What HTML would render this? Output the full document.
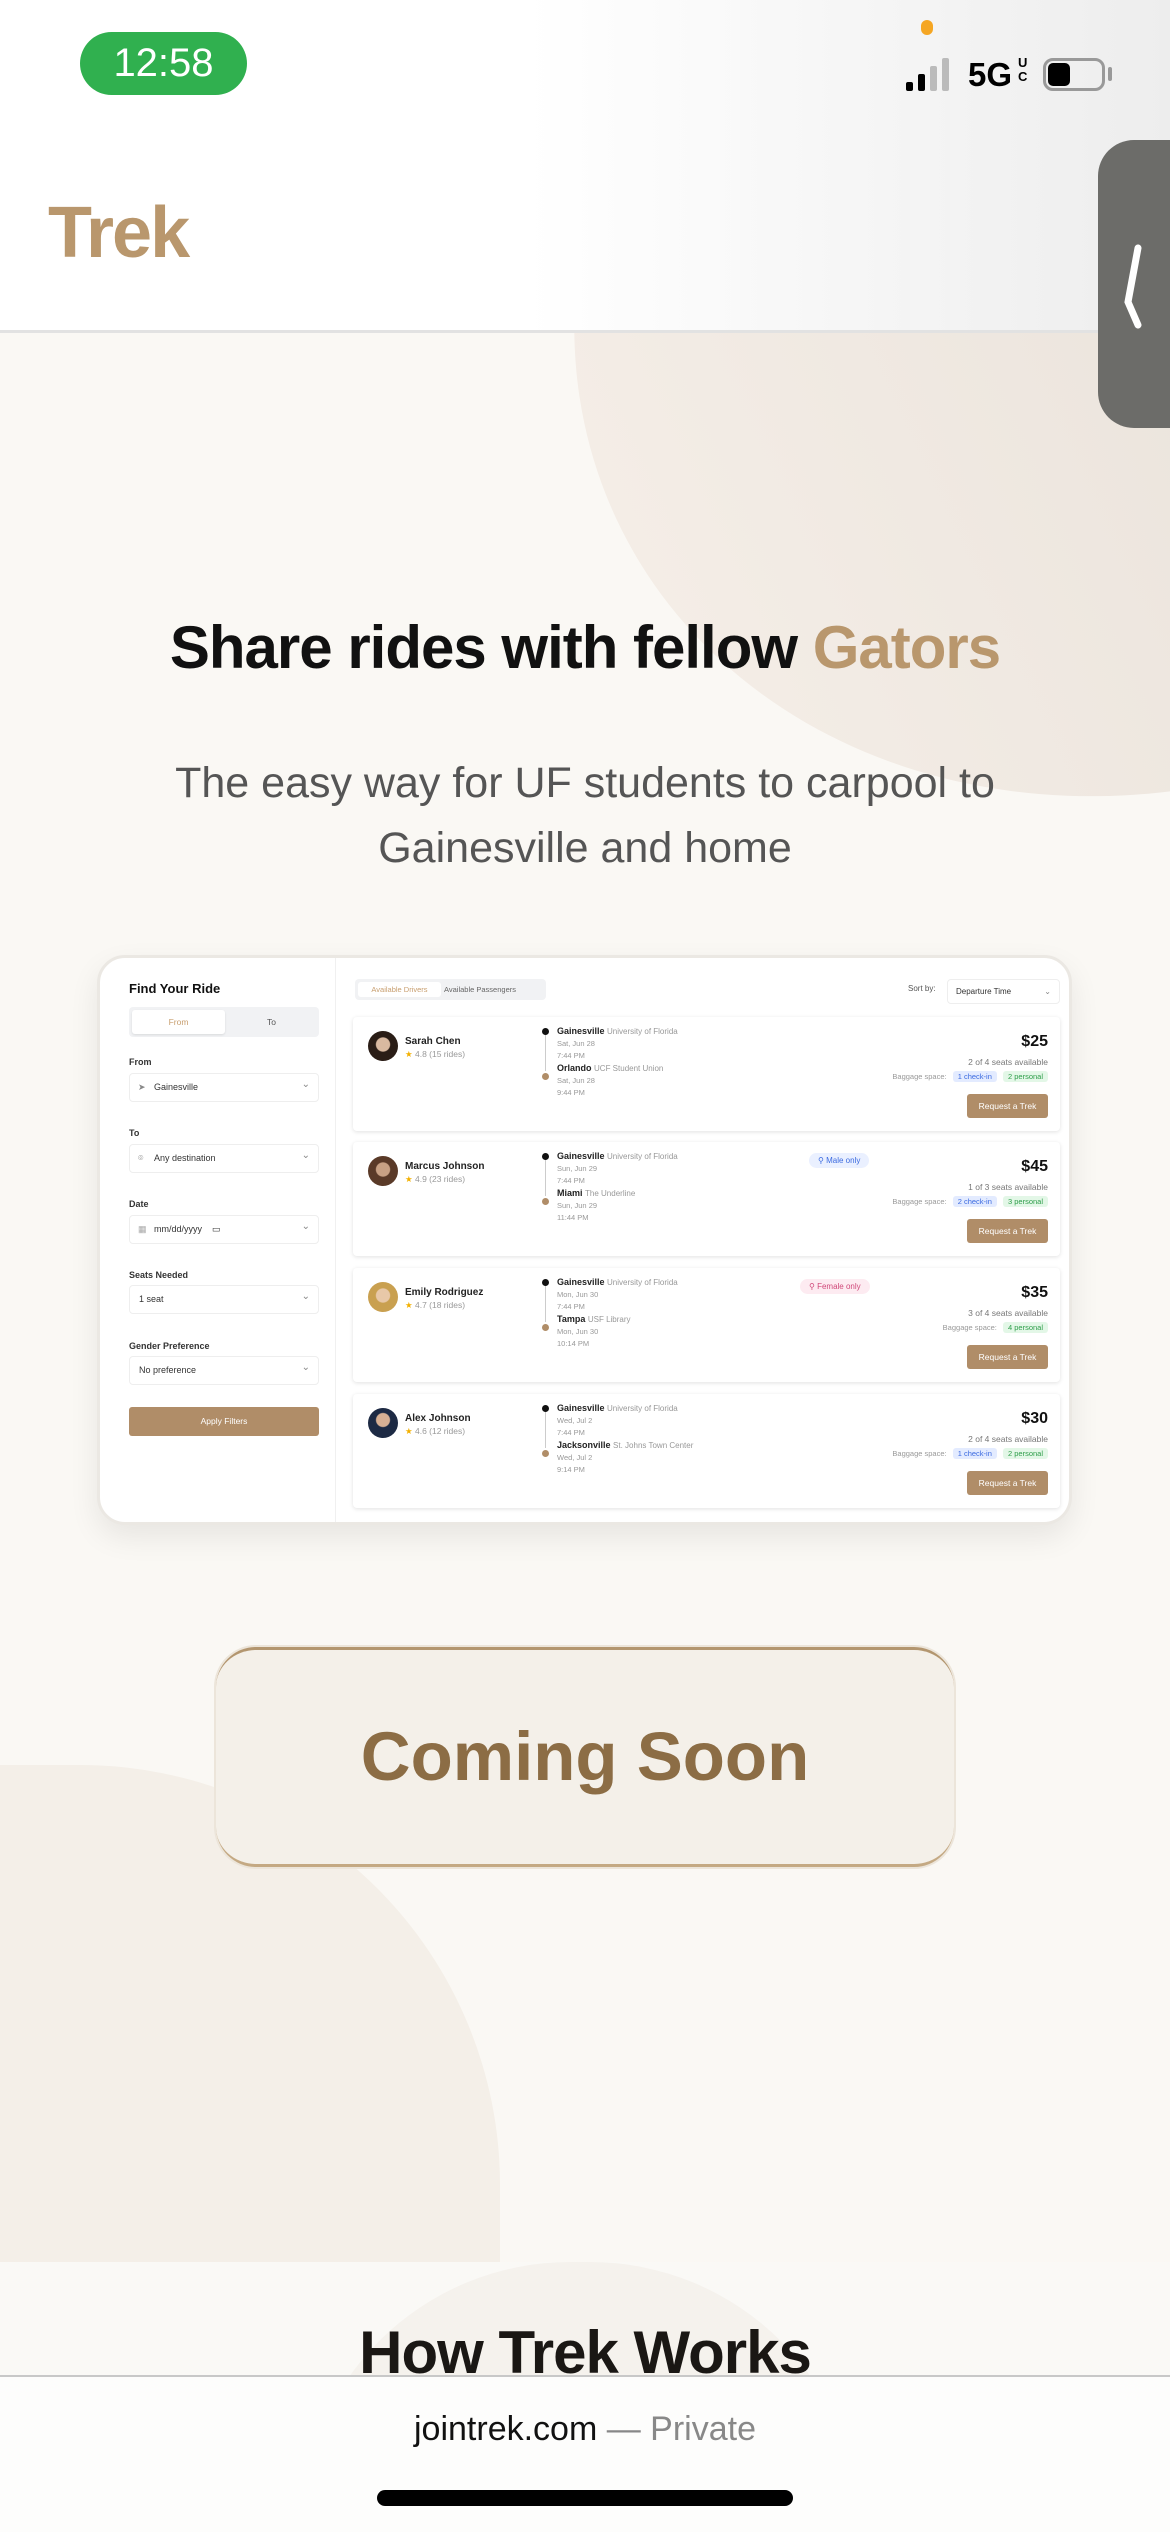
<!DOCTYPE html>
<html style="width:1170px;height:2532px;overflow:hidden"><head><meta charset="utf-8">
<style>
*{box-sizing:border-box;margin:0;padding:0}
html,body{width:1170px;height:2532px;overflow:hidden}
body{background:#faf8f4;font-family:"Liberation Sans",sans-serif;position:relative}
#w{position:absolute;left:0;top:0;width:1170px;height:2532px;overflow:hidden}
.abs{position:absolute}
.header{left:0;top:0;width:1170px;height:333px;background:linear-gradient(90deg,#fff 0%,#fff 45%,#ededed 100%);border-bottom:3px solid #e2e2e2}
.pill{left:80px;top:32px;width:167px;height:63px;border-radius:32px;background:#30b04f;color:#fff;font-size:40px;text-align:center;line-height:63px}
.trek{left:48px;top:192px;font-size:72px;font-weight:bold;color:#b9976d;letter-spacing:-2px}
.tab{left:1098px;top:140px;width:80px;height:288px;background:#6c6c69;border-radius:36px 0 0 36px}
h1{position:absolute;left:0;width:1170px;top:613px;text-align:center;font-size:60px;font-weight:bold;color:#111;letter-spacing:-1px}
.sub{left:0;width:1170px;top:751px;text-align:center;font-size:43px;color:#555;line-height:65px}
.card{left:97px;top:955px;width:975px;height:570px;background:#fff;border-radius:28px;border:3px solid #ebe8e3;box-shadow:0 12px 30px rgba(0,0,0,.08);overflow:hidden}
.lbl{position:absolute;left:29px;font-size:9px;font-weight:bold;color:#333}
.sel{position:absolute;left:29px;width:190px;height:29px;border:1px solid #eee;border-radius:4px;font-size:9px;color:#333;line-height:27px;padding-left:24px}
.sel:after{content:"⌄";position:absolute;right:8px;top:-3px;color:#888;font-size:10px}
.row{position:absolute;left:253px;width:707px;height:114px;background:#fff;border-radius:4px;box-shadow:0 1px 4px rgba(0,0,0,.12)}
.av{position:absolute;left:15px;top:14px;width:30px;height:30px;border-radius:50%}
.nm{position:absolute;left:52px;top:19px;font-size:10px;font-weight:bold;color:#222}
.rt{position:absolute;left:52px;top:32px;font-size:8.5px;color:#999}
.rt b{color:#f3b000;font-weight:normal}
.tl{position:absolute;left:192px;top:14px;width:1px;height:40px;background:#ccc}
.d1{position:absolute;left:189px;top:11px;width:7px;height:7px;border-radius:50%;background:#111}
.d2{position:absolute;left:189px;top:56px;width:7px;height:7px;border-radius:50%;background:#b08d68}
.loc{position:absolute;left:204px;font-size:9px;font-weight:bold;color:#222;white-space:nowrap}
.loc span{font-weight:normal;color:#999;font-size:8px}
.dt{position:absolute;left:204px;font-size:7.5px;color:#999;line-height:12px}
.pr{position:absolute;right:12px;top:16px;font-size:16px;font-weight:bold;color:#111}
.st{position:absolute;right:12px;top:40px;font-size:8.5px;color:#777}
.bg{position:absolute;right:12px;top:55px;font-size:7.5px;color:#999;white-space:nowrap}
.bg i{font-style:normal;padding:1px 5px;border-radius:3px;margin-left:4px}
.b{background:#e3ebff;color:#3b6ae0}.g{background:#e3f7e7;color:#2e9e4a}
.btn{position:absolute;right:12px;top:77px;width:81px;height:24px;background:#b08d68;color:#fff;font-size:8.5px;text-align:center;line-height:24px;border-radius:3px}
.badge{position:absolute;top:11px;font-size:8px;padding:3px 9px;border-radius:9px}
</style></head><body><div id="w">
<div class="abs" style="left:560px;top:-250px;width:1200px;height:1030px;border-radius:50%;background:linear-gradient(90deg,#f4ede6,#e3dcd4);transform:rotate(-25deg)"></div>
<div class="abs" style="left:-400px;top:1765px;width:900px;height:497px;border-radius:0 420px 0 0;background:#f4efe8"></div>
<div class="abs" style="left:0;top:2262px;width:1170px;height:270px;background:#faf9f6"></div>
<div class="abs" style="left:300px;top:2262px;width:560px;height:270px;border-radius:280px 280px 0 0;background:#f5f2ed"></div>

<div class="abs header"></div>
<div class="abs pill">12:58</div>
<div class="abs" style="left:921px;top:20px;width:12px;height:15px;border-radius:6px;background:#f5a623"></div>
<div class="abs" style="left:906px;top:82px;width:7px;height:9px;background:#000;border-radius:2px"></div>
<div class="abs" style="left:918px;top:74px;width:7px;height:17px;background:#000;border-radius:2px"></div>
<div class="abs" style="left:930px;top:66px;width:7px;height:25px;background:#bbb;border-radius:2px"></div>
<div class="abs" style="left:942px;top:58px;width:7px;height:33px;background:#bbb;border-radius:2px"></div>
<div class="abs" style="left:968px;top:56px;font-size:33px;font-weight:bold;color:#000">5G</div>
<div class="abs" style="left:1018px;top:56px;font-size:13px;font-weight:bold;line-height:14px">U<br>C</div>
<div class="abs" style="left:1043px;top:58px;width:62px;height:33px;border:3px solid #999;border-radius:10px"></div>
<div class="abs" style="left:1048px;top:63px;width:22px;height:23px;background:#000;border-radius:5px"></div>
<div class="abs" style="left:1108px;top:67px;width:4px;height:14px;background:#999;border-radius:2px"></div>
<div class="abs trek">Trek</div>
<div class="abs tab"></div>
<svg class="abs" style="left:1115px;top:240px" width="30" height="90"><path d="M23 8 L13 62 L23 85" stroke="#fff" stroke-width="7" fill="none" stroke-linecap="round"/></svg>

<h1>Share rides with fellow <span style="color:#b9976d">Gators</span></h1>
<div class="abs sub">The easy way for UF students to carpool to<br>Gainesville and home</div>

<div class="abs card">
 <div class="abs" style="left:235px;top:0;width:1px;height:570px;background:#f0f0f0"></div>
 <div class="abs" style="left:29px;top:23px;font-size:13px;font-weight:bold;color:#111">Find Your Ride</div>
 <div class="abs" style="left:29px;top:49px;width:190px;height:30px;background:#f1f2f4;border-radius:4px"></div>
 <div class="abs" style="left:32px;top:52px;width:93px;height:24px;background:#fff;border-radius:3px;box-shadow:0 1px 2px rgba(0,0,0,.1);font-size:8.5px;color:#c89e6e;text-align:center;line-height:24px">From</div>
 <div class="abs" style="left:125px;top:52px;width:93px;height:24px;font-size:8.5px;color:#555;text-align:center;line-height:24px">To</div>
 <div class="lbl" style="top:99px">From</div>
 <div class="sel" style="top:115px"><span style="position:absolute;left:8px;color:#888">➤</span>Gainesville</div>
 <div class="lbl" style="top:170px">To</div>
 <div class="sel" style="top:186px"><span style="position:absolute;left:8px;color:#888">⌾</span>Any destination</div>
 <div class="lbl" style="top:241px">Date</div>
 <div class="sel" style="top:257px"><span style="position:absolute;left:8px;color:#aaa">▦</span>mm/dd/yyyy &nbsp;&nbsp; ▭</div>
 <div class="lbl" style="top:312px">Seats Needed</div>
 <div class="sel" style="top:327px;padding-left:9px">1 seat</div>
 <div class="lbl" style="top:383px">Gender Preference</div>
 <div class="sel" style="top:398px;padding-left:9px">No preference</div>
 <div class="abs" style="left:29px;top:449px;width:190px;height:29px;background:#b08d68;border-radius:3px;color:#fff;font-size:8.5px;text-align:center;line-height:29px">Apply Filters</div>

 <div class="abs" style="left:255px;top:21px;width:191px;height:21px;background:#f1f2f4;border-radius:4px"></div>
 <div class="abs" style="left:258px;top:24px;width:83px;height:15px;background:#fff;border-radius:3px;font-size:7.5px;color:#c89e6e;text-align:center;line-height:15px">Available Drivers</div>
 <div class="abs" style="left:344px;top:24px;font-size:7.5px;color:#666;line-height:15px">Available Passengers</div>
 <div class="abs" style="left:808px;top:26px;font-size:8px;color:#555">Sort by:</div>
 <div class="abs" style="left:847px;top:21px;width:113px;height:25px;border:1px solid #eee;border-radius:4px;font-size:8px;color:#333;line-height:23px;padding-left:8px">Departure Time<span style="position:absolute;right:8px;color:#888">⌄</span></div>

 <div class="row" style="top:59px">
  <div class="av" style="background:radial-gradient(circle at 50% 45%,#d9b9a0 30%,#2a1d16 34%)"></div>
  <div class="nm">Sarah Chen</div><div class="rt"><b>★</b> 4.8 (15 rides)</div>
  <div class="tl"></div><div class="d1"></div><div class="d2"></div>
  <div class="loc" style="top:9px">Gainesville <span>University of Florida</span></div>
  <div class="dt" style="top:21px">Sat, Jun 28<br>7:44 PM</div>
  <div class="loc" style="top:46px">Orlando <span>UCF Student Union</span></div>
  <div class="dt" style="top:58px">Sat, Jun 28<br>9:44 PM</div>
  <div class="pr">$25</div><div class="st">2 of 4 seats available</div>
  <div class="bg">Baggage space: <i class="b">1 check-in</i> <i class="g">2 personal</i></div>
  <div class="btn">Request a Trek</div>
 </div>
 <div class="row" style="top:184px">
  <div class="av" style="background:radial-gradient(circle at 50% 45%,#c8a184 30%,#5a3a28 34%)"></div>
  <div class="nm">Marcus Johnson</div><div class="rt"><b>★</b> 4.9 (23 rides)</div>
  <div class="tl"></div><div class="d1"></div><div class="d2"></div>
  <div class="loc" style="top:9px">Gainesville <span>University of Florida</span></div>
  <div class="dt" style="top:21px">Sun, Jun 29<br>7:44 PM</div>
  <div class="loc" style="top:46px">Miami <span>The Underline</span></div>
  <div class="dt" style="top:58px">Sun, Jun 29<br>11:44 PM</div>
  <div class="badge" style="left:456px;background:#eaf0ff;color:#3b6ae0">⚲ Male only</div>
  <div class="pr">$45</div><div class="st">1 of 3 seats available</div>
  <div class="bg">Baggage space: <i class="b">2 check-in</i> <i class="g">3 personal</i></div>
  <div class="btn">Request a Trek</div>
 </div>
 <div class="row" style="top:310px">
  <div class="av" style="background:radial-gradient(circle at 50% 45%,#e8c8a8 30%,#c9a050 34%)"></div>
  <div class="nm">Emily Rodriguez</div><div class="rt"><b>★</b> 4.7 (18 rides)</div>
  <div class="tl"></div><div class="d1"></div><div class="d2"></div>
  <div class="loc" style="top:9px">Gainesville <span>University of Florida</span></div>
  <div class="dt" style="top:21px">Mon, Jun 30<br>7:44 PM</div>
  <div class="loc" style="top:46px">Tampa <span>USF Library</span></div>
  <div class="dt" style="top:58px">Mon, Jun 30<br>10:14 PM</div>
  <div class="badge" style="left:447px;background:#fdebf1;color:#d0497a">⚲ Female only</div>
  <div class="pr">$35</div><div class="st">3 of 4 seats available</div>
  <div class="bg">Baggage space: <i class="g">4 personal</i></div>
  <div class="btn">Request a Trek</div>
 </div>
 <div class="row" style="top:436px">
  <div class="av" style="background:radial-gradient(circle at 50% 40%,#d8b094 28%,#1d2a44 32%)"></div>
  <div class="nm">Alex Johnson</div><div class="rt"><b>★</b> 4.6 (12 rides)</div>
  <div class="tl"></div><div class="d1"></div><div class="d2"></div>
  <div class="loc" style="top:9px">Gainesville <span>University of Florida</span></div>
  <div class="dt" style="top:21px">Wed, Jul 2<br>7:44 PM</div>
  <div class="loc" style="top:46px">Jacksonville <span>St. Johns Town Center</span></div>
  <div class="dt" style="top:58px">Wed, Jul 2<br>9:14 PM</div>
  <div class="pr">$30</div><div class="st">2 of 4 seats available</div>
  <div class="bg">Baggage space: <i class="b">1 check-in</i> <i class="g">2 personal</i></div>
  <div class="btn">Request a Trek</div>
 </div>
</div>

<div class="abs" style="left:216px;top:1647px;width:738px;height:220px;border-radius:40px;background:#f4f0e9;border-top:3px solid #b3966f;border-bottom:3px solid #c4a983;box-shadow:0 0 0 2px #ece5da;font-size:69px;font-weight:bold;color:#8c6d45;text-align:center;line-height:214px">Coming Soon</div>

<div class="abs" style="left:0;top:2318px;width:1170px;text-align:center;font-size:60px;font-weight:bold;color:#1a1714;letter-spacing:-1px">How Trek Works</div>
<div class="abs" style="left:0;top:2375px;width:1170px;height:157px;background:rgba(253,253,252,.97);border-top:2px solid #c8c8c8"></div>
<div class="abs" style="left:0;top:2410px;width:1170px;text-align:center;font-size:34px;color:#111">jointrek.com <span style="color:#888">— Private</span></div>
<div class="abs" style="left:377px;top:2490px;width:416px;height:16px;border-radius:8px;background:#000"></div>
</div></body></html>
